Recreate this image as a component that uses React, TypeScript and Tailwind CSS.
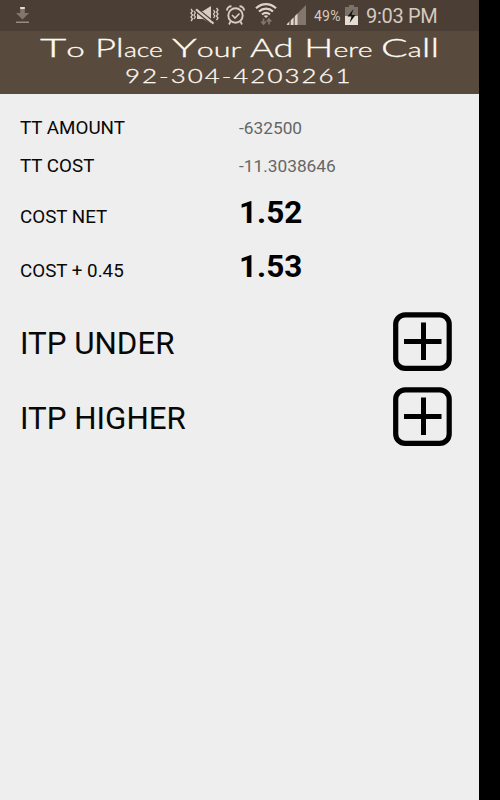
import React from "react";

interface ResultRowProps {
    label: string;
    value: string;
    rowClass: string;
    valueClass: string;
}

interface BannerWordProps {
    word: string;
    boxClass: string;
    stretchClass: string;
}

function DownloadIcon() {
    return (
        <svg width="14" height="18" viewBox="0 0 14 18" className="shrink-0">
            <path d="M4.2 2h4.6v6H13l-6.5 6.500L0 8h4.200z" fill="#81766d"/>
            <path d="M4.2 2h4.6v2H4.2z" fill="#e3dcd3"/>
            <path d="M0 16.500h13V18H0z" fill="#968b81"/>
        </svg>
    );
}

function VibrateIcon() {
    return (
        <svg width="29" height="20" viewBox="0 0 29 20" className="shrink-0" fill="none" stroke="#d8cdc0">
            <path d="M7 5h6l8-5v17.500l-8-4.500H7z" fill="#d8cdc0" stroke="none"/>
            <path d="M6 1.300 24 16" stroke="#4a3e35" strokeWidth="1.500"/>
            <path d="M6 3.300 23.500 17.700" strokeWidth="2.200"/>
            <path d="M5.500 5.200 22 18.700" stroke="#4a3e35" strokeWidth="1.300"/>
            <path d="M1 3l1.500 2L1 7l1.500 2L1 11l1.500 2L1 15M4 5l1.300 2L4 9l1.300 2L4 13" strokeWidth="1.300"/>
            <path d="M23.500 4l1.300 2-1.300 2 1.300 2-1.300 2M26.500 2l1.500 2-1.500 2L28 8l-1.500 2 1.500 2-1.500 2" strokeWidth="1.300"/>
        </svg>
    );
}

function AlarmIcon() {
    return (
        <svg width="19" height="20" viewBox="0 0 19 20" className="shrink-0" fill="none" stroke="#d8cdc0">
            <circle cx="9.5" cy="10.5" r="7.2" strokeWidth="1.9"/>
            <path d="M6 10l3 3 4.5-4.5" strokeWidth="1.6"/>
            <path d="M1 5.5C1 3 3 1.2 5.500 1.200M18 5.500c0-2.500-2-4.300-4.500-4.300" strokeWidth="2"/>
            <path d="M4.500 16.500 3 19.500M14.500 16.500 16 19.500" strokeWidth="1.700"/>
        </svg>
    );
}

function WifiIcon() {
    return (
        <svg width="22" height="23" viewBox="0 0 22 23" className="shrink-0" fill="none" stroke="#ded4c8">
            <path d="M1 5.300C7-.300 15-.300 21 5.300M4 8.500c4-3.800 10-3.800 14 0M7 11.500c2.500-2.100 5.500-2.100 8 0" strokeWidth="2.200"/>
            <path d="M8.800 13 11 15l2.200-2q-2.200-1.300-4.400 0z" fill="#ded4c8" stroke="none"/>
            <path d="M8.500 15.500V21M6.200 18.500l2.300 2.500 2.300-2.500M14 21.500V16M11.700 18.500 14 16l2.300 2.500" stroke="#83776c" strokeWidth="1.700"/>
        </svg>
    );
}

function SignalIcon() {
    return (
        <svg width="20" height="20" viewBox="0 0 20 20" className="shrink-0">
            <path d="M0 20 20 0v20z" fill="#82776d"/>
            <path d="M1 19 3 17v3H1zM5 15l2.500-2.500V20H5zM9 11l2.500-2.500V20H9z" fill="#ded4c8"/>
        </svg>
    );
}

function BatteryIcon() {
    return (
        <svg width="13" height="20" viewBox="0 0 13 20" className="shrink-0">
            <path d="M4 0h5v2h4v18H0V2h4z" fill="#7d7268"/>
            <path d="M0 11h13v9H0z" fill="#e5ddd3"/>
            <path d="M8.500 4 2.500 11.500h4L4.500 18l6-8h-4z" fill="#17120e"/>
        </svg>
    );
}

function StatusBar() {
    return (
        <header className="flex h-[31px] shrink-0 items-start bg-[#4a3e35] pl-4 text-[#d5cabe]">
            <div className="pt-[5px]"><DownloadIcon/></div>
            <div className="ml-[160px] pt-[6px]"><VibrateIcon/></div>
            <div className="ml-[7px] pt-[5px]"><AlarmIcon/></div>
            <div className="ml-[10px] pt-[3px]"><WifiIcon/></div>
            <div className="ml-[9px] pt-[5px]"><SignalIcon/></div>
            <span className="ml-2 w-[31px] pt-[8px] text-[14px] leading-4 tracking-[0.200px]">49%</span>
            <div className="pt-[5px]"><BatteryIcon/></div>
            <span className="ml-[8px] pt-[4px] text-[20px] leading-6 whitespace-nowrap tracking-[-0.300px]">9:03 PM</span>
        </header>
    );
}

// Capitals and ascenders are set larger than the low, wide vowels
function BannerWord({word, boxClass, stretchClass}: BannerWordProps) {
    return (
        <span className={boxClass}>
            <span className={`inline-block origin-left whitespace-nowrap ${stretchClass}`}>
                {word.split("").map((char, i) => (
                    <span key={i} className={/[A-Zld]/.test(char) ? "text-[26px]" : "text-[19px]"}>{char}</span>
                ))}
            </span>
        </span>
    );
}

function AdBanner() {
    return (
        <div className="h-[63px] shrink-0 overflow-hidden bg-[#594a3e] font-['Lato',sans-serif] font-light text-[#fffaf0] [-webkit-text-stroke:0.300px_#fffaf0]">
            <div className="flex h-[33px] pl-[40px] pt-[1px] leading-[31px]">
                <BannerWord word="To" boxClass="w-[55px]" stretchClass="scale-x-[1.750]"/>
                <BannerWord word="Place" boxClass="w-[77px]" stretchClass="scale-x-[1.400]"/>
                <BannerWord word="Your" boxClass="w-[78px]" stretchClass="scale-x-[1.600]"/>
                <BannerWord word="Ad" boxClass="w-[54px]" stretchClass="scale-x-[1.400]"/>
                <BannerWord word="Here" boxClass="w-[77px]" stretchClass="scale-x-[1.500]"/>
                <BannerWord word="Call" boxClass="w-[60px]" stretchClass="scale-x-[1.520]"/>
            </div>
            <div className="h-[24px] pl-[125px] leading-[24px]">
                <span className="inline-block origin-left scale-x-[1.360] text-[19px] whitespace-nowrap tracking-[1.500px]">
                    92-304-4203261
                </span>
            </div>
        </div>
    );
}

function ResultRow({label, value, rowClass, valueClass}: ResultRowProps) {
    return (
        <div className={`flex items-baseline ${rowClass}`}>
            <span className="w-[219px] text-[18.800px] text-[#080808]">{label}</span>
            <span className={valueClass}>{value}</span>
        </div>
    );
}

function AddButton({label}: { label: string }) {
    return (
        <button type="button" aria-label={label}>
            <svg width="59" height="59" viewBox="0 0 59 59" fill="none" stroke="#000">
                <rect x="2.700" y="2.900" width="53.500" height="53.500" rx="9.500" strokeWidth="5.200"/>
                <path d="M30.500 10.500v37.500M11 29.500h37.500" strokeWidth="5"/>
            </svg>
        </button>
    );
}

function ItpRow({label}: { label: string }) {
    return (
        <div className="flex h-[75px] items-center justify-between pr-[27px]">
            <span className="pt-[4px] text-[31.300px] leading-9 text-[#080808]">{label}</span>
            <AddButton label={`Add ${label}`}/>
        </div>
    );
}

export default function App() {
    return (
        <div className="h-[800px] w-[500px] overflow-hidden bg-black font-['Roboto',sans-serif]">
            <div className="flex h-full w-[479px] flex-col bg-[#eee]">
                <StatusBar/>
                <AdBanner/>
                <main className="pl-[20px]">
                    <ResultRow label="TT AMOUNT" value="-632500" rowClass="h-[38px] pt-[20px]"
                               valueClass="text-[17.300px] text-[#666]"/>
                    <ResultRow label="TT COST" value="-11.3038646" rowClass="h-[38px] pt-[20px]"
                               valueClass="text-[17.300px] text-[#666]"/>
                    <ResultRow label="COST NET" value="1.52" rowClass="h-[54px] pt-[19px]"
                               valueClass="text-[31.500px] font-bold text-black"/>
                    <ResultRow label="COST + 0.45" value="1.53" rowClass="h-[80px] pt-[19px]"
                               valueClass="text-[31.500px] font-bold text-black"/>
                    <ItpRow label="ITP UNDER"/>
                    <ItpRow label="ITP HIGHER"/>
                </main>
            </div>
        </div>
    );
}
